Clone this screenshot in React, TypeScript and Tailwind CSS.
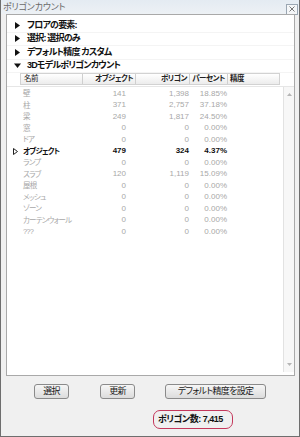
import React from "react";

type Row = { name: string; obj: string; poly: string; pct: string; bold?: boolean };

const rows: Row[] = [
  { name: "壁", obj: "141", poly: "1,398", pct: "18.85%" },
  { name: "柱", obj: "371", poly: "2,757", pct: "37.18%" },
  { name: "梁", obj: "249", poly: "1,817", pct: "24.50%" },
  { name: "窓", obj: "0", poly: "0", pct: "0.00%" },
  { name: "ドア", obj: "0", poly: "0", pct: "0.00%" },
  { name: "オブジェクト", obj: "479", poly: "324", pct: "4.37%", bold: true },
  { name: "ランプ", obj: "0", poly: "0", pct: "0.00%" },
  { name: "スラブ", obj: "120", poly: "1,119", pct: "15.09%" },
  { name: "屋根", obj: "0", poly: "0", pct: "0.00%" },
  { name: "メッシュ", obj: "0", poly: "0", pct: "0.00%" },
  { name: "ゾーン", obj: "0", poly: "0", pct: "0.00%" },
  { name: "カーテンウォール", obj: "0", poly: "0", pct: "0.00%" },
  { name: "???", obj: "0", poly: "0", pct: "0.00%" },
];

const tree = [
  { label: "フロアの要素:", open: false },
  { label: "選択: 選択のみ", open: false },
  { label: "デフォルト精度 カスタム", open: false },
  { label: "3Dモデルポリゴンカウント", open: true },
];

function Tri({ open }: { open: boolean }) {
  return open ? (
    <svg width="7" height="6" viewBox="0 0 7 6">
      <polygon points="0,0.5 7,0.5 3.5,5" fill="#111" />
    </svg>
  ) : (
    <svg width="5" height="7" viewBox="0 0 5 7">
      <polygon points="0,0 5,3.5 0,7" fill="#111" />
    </svg>
  );
}

function Btn({ w, children }: { w: string; children: React.ReactNode }) {
  return (
    <div
      className={`${w} h-[15px] flex items-center justify-center rounded-[3px] border border-[#8a8a8a] bg-gradient-to-b from-[#f6f6f6] to-[#dcdcdc] text-[9px] tracking-[-0.7px] leading-none text-[#1a1a1a] whitespace-nowrap`}
    >
      {children}
    </div>
  );
}

export default function App() {
  return (
    <div className="w-[300px] h-[437px] flex flex-col bg-[#f0f0f0] border-l border-r border-b border-[#6e6e6e] overflow-hidden font-['Liberation_Sans','Noto_Sans_CJK_JP',sans-serif] [font-feature-settings:'palt']">
      {/* title bar */}
      <div className="h-[14px] shrink-0 flex items-center justify-between bg-gradient-to-b from-[#e4ebf2] to-[#edf1f5] pl-[2px] pr-[1px]">
        <span className="text-[9px] leading-none text-[#6a6a6a] tracking-[-0.2px] whitespace-nowrap">ポリゴンカウント</span>
        <div className="w-[12px] h-[11px] mt-[4px] border border-[#9aa6b2] bg-[#f4f6f8] flex items-center justify-center">
          <svg width="6" height="6" viewBox="0 0 6 6">
            <path d="M0.5 0.5 L5.5 5.5 M5.5 0.5 L0.5 5.5" stroke="#777" strokeWidth="1" />
          </svg>
        </div>
      </div>

      {/* main panel */}
      <div className="pl-[5px] pr-[4px] shrink-0">
        <div className="h-[362px] border border-[#a9a9a9] bg-white flex flex-col">
          <div className="pt-[4px] shrink-0">
            {tree.map((t) => (
              <div key={t.label} className="h-[13.5px] flex items-center border-b border-[#f4f4f4]">
                <div className="ml-[7px] w-[7px] flex items-center justify-center">
                  <Tri open={t.open} />
                </div>
                <span className="ml-[6px] text-[9px] tracking-[-0.8px] leading-none font-bold text-[#111] whitespace-nowrap">
                  {t.label}
                </span>
              </div>
            ))}
          </div>

          {/* header */}
          <div className="ml-[13px] w-[260px] h-[12px] shrink-0 flex border border-[#d2d2d2] bg-gradient-to-b from-[#ffffff] to-[#ececec] text-[7.5px] tracking-[-0.5px] leading-none text-[#222] whitespace-nowrap">
            <div className="w-[62px] flex items-center pl-[3px] border-r border-[#cfcfcf]">名前</div>
            <div className="w-[53px] flex items-center justify-end pr-[2px] border-r border-[#cfcfcf] font-semibold">オブジェクト</div>
            <div className="w-[54px] flex items-center justify-end pr-[2px] border-r border-[#cfcfcf] font-semibold">ポリゴン</div>
            <div className="w-[38px] flex items-center justify-center border-r border-[#cfcfcf] font-semibold">パーセント</div>
            <div className="flex-1 flex items-center pl-[2px] font-semibold">精度</div>
          </div>

          {/* list */}
          <div className="flex-1 flex mt-[1px] border-t border-[#e6e6e6] min-h-0">
            <div className="flex-1 pt-[1px]">
              {rows.map((r) => (
                <div
                  key={r.name}
                  className={`h-[11.5px] flex items-center text-[8px] leading-none whitespace-nowrap ${
                    r.bold ? "text-[#111] font-bold" : "text-[#a8a8a8]"
                  }`}
                >
                  <div className="w-[16px] flex items-center justify-end pr-[5px]">
                    {r.bold && (
                      <svg width="5" height="7" viewBox="0 0 5 7">
                        <polygon points="0.5,0.5 4.5,3.5 0.5,6.5" fill="none" stroke="#222" strokeWidth="1" />
                      </svg>
                    )}
                  </div>
                  <div className="w-[60px] text-[7.5px] tracking-[-0.8px]">{r.name}</div>
                  <div className="w-[43px] text-right">{r.obj}</div>
                  <div className="w-[63px] text-right">{r.poly}</div>
                  <div className="w-[38px] text-right">{r.pct}</div>
                </div>
              ))}
            </div>
            {/* scrollbar */}
            <div className="w-[11px] mb-[3px] border-l border-[#e2e2e2] bg-[#f7f7f7] flex flex-col items-center justify-between py-[6px]">
              <svg width="5" height="3" viewBox="0 0 5 3">
                <polygon points="0,3 5,3 2.5,0" fill="#b5b5b5" />
              </svg>
              <svg width="5" height="3" viewBox="0 0 5 3">
                <polygon points="0,0 5,0 2.5,3" fill="#b5b5b5" />
              </svg>
            </div>
          </div>
        </div>
      </div>

      {/* bottom area */}
      <div className="flex-1 flex flex-col pt-[8px]">
        <div className="flex">
          <div className="ml-[33px]">
            <Btn w="w-[35px]">選択</Btn>
          </div>
          <div className="ml-[31px]">
            <Btn w="w-[35px]">更新</Btn>
          </div>
          <div className="ml-[30px]">
            <Btn w="w-[101px]">デフォルト精度を設定</Btn>
          </div>
        </div>
        <div className="mt-[11px] ml-[152px] w-[80px] h-[19px] rounded-[7px] border-[1.5px] border-[#c4385c] flex items-center pl-[4px] text-[9px] tracking-[-0.5px] leading-none font-bold text-[#111] whitespace-nowrap">
          ポリゴン数: 7,415
        </div>
      </div>
    </div>
  );
}
